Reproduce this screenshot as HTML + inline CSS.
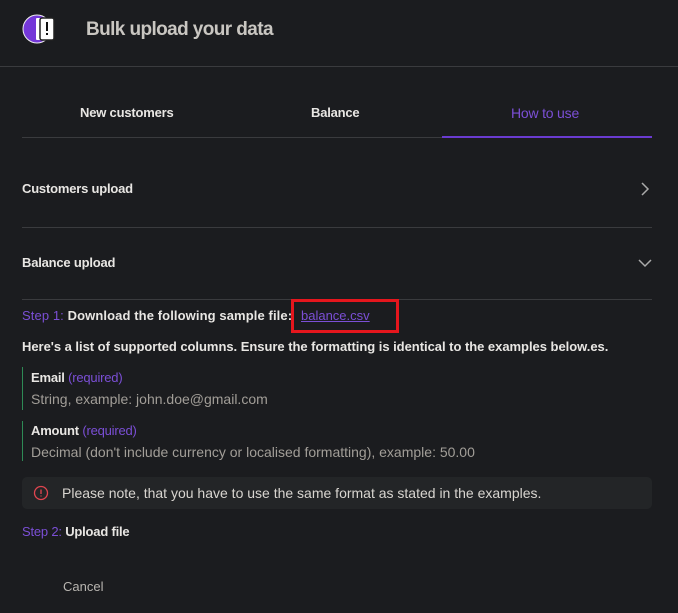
<!DOCTYPE html>
<html><head><style>
*{margin:0;padding:0;box-sizing:border-box}
body{width:678px;height:613px;background:#1b1c1f;font-family:"Liberation Sans",sans-serif;color:#e8e6e3;position:relative;overflow:hidden}
.a{position:absolute}
.hr{position:absolute;height:1px;background:#3a3b3e}
.b{font-size:13px;font-weight:bold;letter-spacing:-0.2px}
.p{color:#7b4fd6}
.g{color:#a29e98;font-size:14px}
</style></head><body>
<svg class="a" style="left:22px;top:12px" width="40" height="36"><circle cx="15" cy="17" r="14" fill="#7437d8" stroke="#eee" stroke-width="1"/><rect x="14" y="6" width="5" height="22" rx="1" fill="#fff"/><rect x="18" y="6" width="14" height="22" rx="2" fill="#fff" stroke="#222" stroke-width="1.5"/><rect x="24" y="10" width="2" height="9" fill="#111"/><rect x="24" y="21" width="2" height="2" fill="#111"/></svg>
<div class="a" style="left:86px;top:19px;font-size:19px;font-weight:bold;color:#c9c6c1;letter-spacing:-0.6px">Bulk upload your data</div>
<div class="hr" style="left:0;right:0;top:66px"></div>
<div class="a b" style="left:80px;top:105px">New customers</div>
<div class="a b" style="left:311px;top:105px">Balance</div>
<div class="a b p" style="left:511px;top:105px;font-weight:normal;font-size:14px">How to use</div>
<div class="hr" style="left:22px;width:630px;top:137px"></div>
<div class="a" style="left:442px;width:210px;top:136px;height:2px;background:#6a3bd0"></div>
<div class="a b" style="left:22px;top:181px">Customers upload</div>
<svg class="a" style="left:638px;top:182px" width="14" height="14"><path d="M4 1l6 6-6 6" stroke="#aaa" fill="none" stroke-width="1.5"/></svg>
<div class="hr" style="left:22px;width:630px;top:227px"></div>
<div class="a b" style="left:22px;top:255px">Balance upload</div>
<svg class="a" style="left:637px;top:257px" width="16" height="12"><path d="M2 3l6 6 6-6" stroke="#aaa" fill="none" stroke-width="1.5"/></svg>
<div class="hr" style="left:22px;width:630px;top:299px"></div>
<div class="a b" style="left:22px;top:308px;letter-spacing:0.1px"><span class="p" style="font-weight:normal">Step 1:</span> Download the following sample file:</div>
<div class="a" style="left:291px;top:299px;width:108px;height:34px;border:3px solid #e5161d"></div>
<div class="a" style="left:301px;top:308px;font-size:13px;color:#7b4fd6;text-decoration:underline">balance.csv</div>
<div class="a b" style="left:22px;top:339px;letter-spacing:-0.03px">Here's a list of supported columns. Ensure the formatting is identical to the examples below.es.</div>
<div class="a" style="left:22px;top:367px;width:1px;height:43px;background:#2e8a55"></div>
<div class="a b" style="left:31px;top:370px">Email <span class="p" style="font-weight:normal">(required)</span></div>
<div class="a g" style="left:31px;top:391px">String, example: john.doe@gmail.com</div>
<div class="a" style="left:22px;top:421px;width:1px;height:40px;background:#2e8a55"></div>
<div class="a b" style="left:31px;top:423px">Amount <span class="p" style="font-weight:normal">(required)</span></div>
<div class="a g" style="left:31px;top:444px">Decimal (don't include currency or localised formatting), example: 50.00</div>
<div class="a" style="left:22px;top:477px;width:630px;height:32px;background:#232527;border-radius:5px"></div>
<svg class="a" style="left:33px;top:485px" width="16" height="16"><circle cx="8" cy="8" r="6.5" stroke="#e0454f" fill="none" stroke-width="1.3"/><path d="M8 4.5v4.5M8 10.5v1" stroke="#e0454f" stroke-width="1.3"/></svg>
<div class="a" style="left:62px;top:485px;font-size:14px;color:#d8d5d0">Please note, that you have to use the same format as stated in the examples.</div>
<div class="a b" style="left:22px;top:524px"><span class="p" style="font-weight:normal">Step 2:</span> Upload file</div>
<div class="a" style="left:63px;top:579px;font-size:13px;color:#b8b5b0">Cancel</div>
</body></html>
